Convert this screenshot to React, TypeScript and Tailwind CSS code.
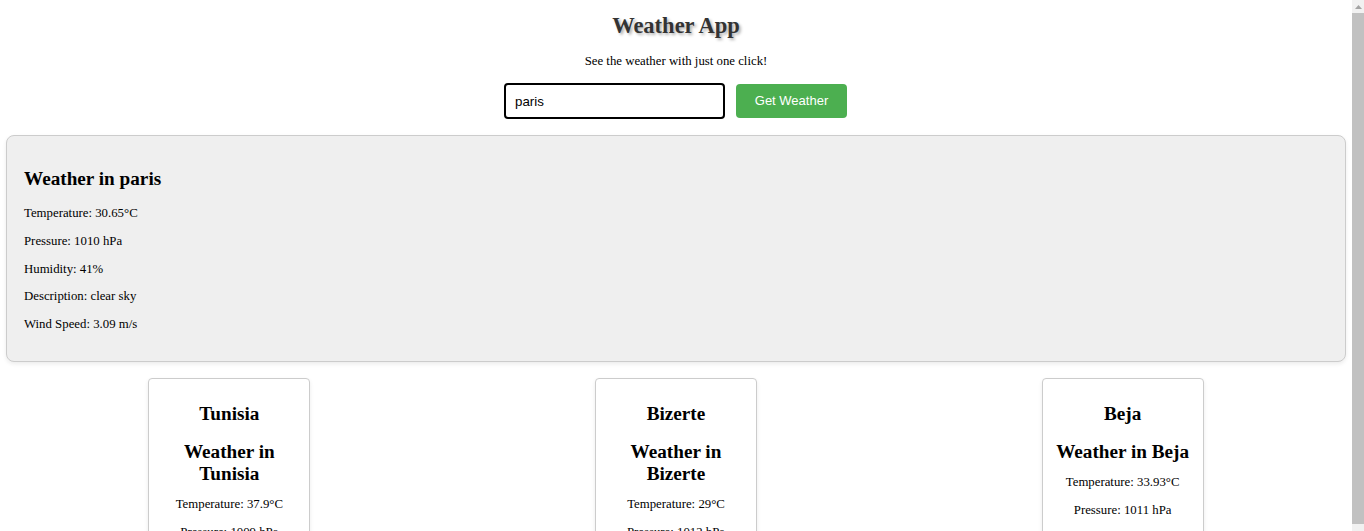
import { useState } from "react";

interface CityWeather {
  city: string;
  temp: string;
  pressure: string;
  humidity: string;
  description: string;
  wind: string;
}

const cities: CityWeather[] = [
  { city: "Tunisia", temp: "37.9", pressure: "1009", humidity: "28", description: "clear sky", wind: "5.14" },
  { city: "Bizerte", temp: "29", pressure: "1012", humidity: "58", description: "few clouds", wind: "4.63" },
  { city: "Beja", temp: "33.93", pressure: "1011", humidity: "35", description: "clear sky", wind: "2.4" },
];

export default function App() {
  const [query, setQuery] = useState("paris");

  return (
    <div className="flex h-screen overflow-hidden bg-white">
      <div className="min-w-0 flex-1 overflow-hidden">
        <div className="px-[6px] pb-[20px] text-black font-['Liberation_Serif',serif]">
          {/* Header */}
          <h1 className="pt-[12px] text-center text-[22.5px] leading-[27px] font-bold text-[#333] [text-shadow:2px_2px_3px_rgba(0,0,0,0.3)]">
            Weather App
          </h1>
          <p className="mt-[15px] text-center text-[12.8px] leading-[15px]">
            See the weather with just one click!
          </p>

          <div className="mt-[14px] flex items-center justify-center gap-[11px] pr-[1px]">
            <input
              value={query}
              onChange={(e) => setQuery(e.target.value)}
              className="h-[36px] w-[221px] rounded-[4px] border-2 border-black px-[9px] text-[13.3px] font-['Liberation_Sans',sans-serif] outline-none"
            />
            <button className="h-[34px] w-[111px] rounded-[4px] bg-[#4caf50] text-[13px] text-white font-['Liberation_Sans',sans-serif]">
              Get Weather
            </button>
          </div>

          {/* Current city */}
          <div className="mt-[16px] rounded-[8px] border border-[#ccc] bg-[#efefef] px-[17px] pt-[16px] pb-[16px] shadow-[0_2px_4px_rgba(0,0,0,0.08)]">
            <h2 className="mt-[16px] text-[19.2px] leading-[22px] font-bold">Weather in {query}</h2>
            <p className="mt-[16px] text-[12.8px] leading-[15px]">Temperature: 30.65°C</p>
            <p className="mt-[12.75px] text-[12.8px] leading-[15px]">Pressure: 1010 hPa</p>
            <p className="mt-[12.75px] text-[12.8px] leading-[15px]">Humidity: 41%</p>
            <p className="mt-[12.75px] text-[12.8px] leading-[15px]">Description: clear sky</p>
            <p className="mt-[12.75px] mb-[13px] text-[12.8px] leading-[15px]">Wind Speed: 3.09 m/s</p>
          </div>

          {/* Tunisian cities */}
          <div className="mt-[16px] flex items-start justify-around">
            {cities.map((c) => (
              <div
                key={c.city}
                className="w-[162px] rounded-[4px] border border-[#ccc] bg-white px-[10px] pt-[8px] pb-[8px] text-center shadow-[0_2px_4px_rgba(0,0,0,0.08)]"
              >
                <h2 className="mt-[16px] text-[19.2px] leading-[22px] font-bold">{c.city}</h2>
                <h2 className="mt-[16px] text-[19.2px] leading-[22px] font-bold">Weather in {c.city}</h2>
                <p className="mt-[12px] text-[12.8px] leading-[15px]">Temperature: {c.temp}°C</p>
                <p className="mt-[12.75px] text-[12.8px] leading-[15px]">Pressure: {c.pressure} hPa</p>
                <p className="mt-[12.75px] text-[12.8px] leading-[15px]">Humidity: {c.humidity}%</p>
                <p className="mt-[12.75px] text-[12.8px] leading-[15px]">Description: {c.description}</p>
                <p className="mt-[12.75px] mb-[13px] text-[12.8px] leading-[15px]">Wind Speed: {c.wind} m/s</p>
              </div>
            ))}
          </div>
        </div>
      </div>

      {/* Page scrollbar */}
      <div className="flex w-[12px] shrink-0 flex-col bg-[#f1f1f1]">
        <div className="flex h-[13px] items-center justify-center">
          <svg width="7" height="4" viewBox="0 0 7 4">
            <path d="M3.5 0 L7 4 L0 4 Z" fill="#a3a3a3" />
          </svg>
        </div>
        <div className="h-[511px] bg-[#c1c1c1]" />
      </div>
    </div>
  );
}
